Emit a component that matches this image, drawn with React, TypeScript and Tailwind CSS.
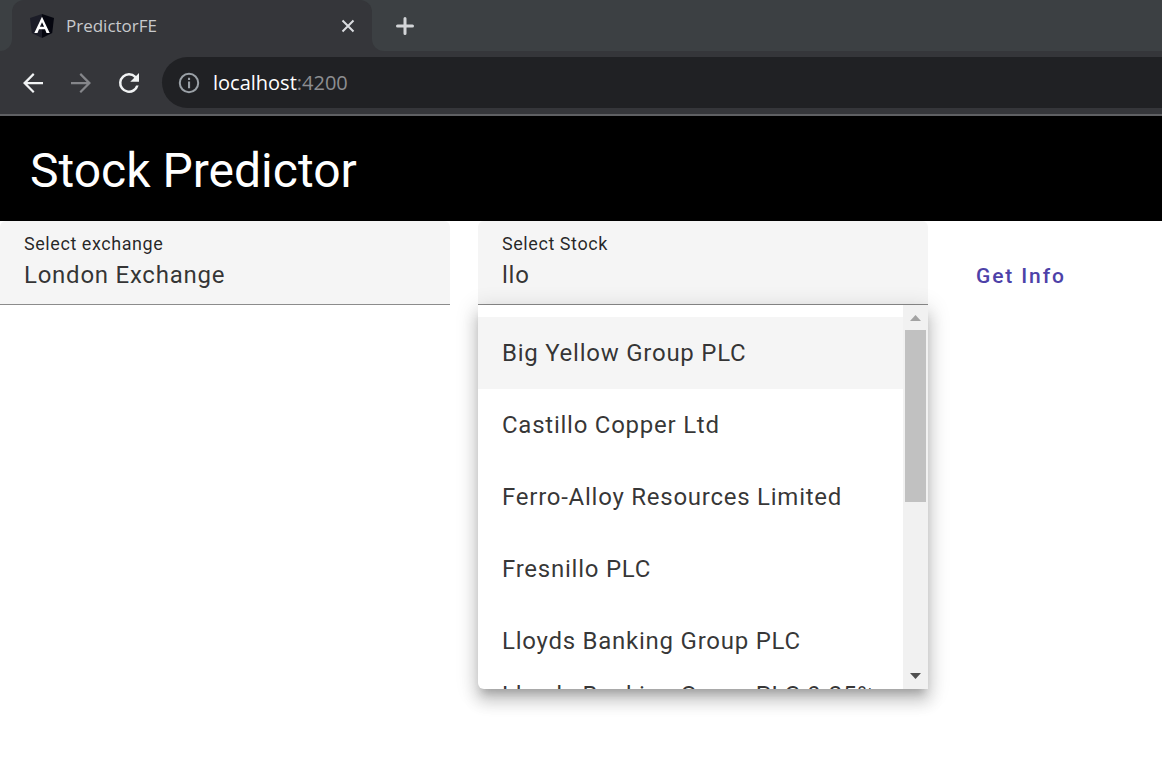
import { useState } from "react";

const stocks = [
  "Big Yellow Group PLC",
  "Castillo Copper Ltd",
  "Ferro-Alloy Resources Limited",
  "Fresnillo PLC",
  "Lloyds Banking Group PLC",
  "Lloyds Banking Group PLC 9.25% Non-Cum Pref",
];

function AngularLogo() {
  return (
    <svg viewBox="0 0 24 24" className="size-6 shrink-0" aria-hidden="true">
      <path d="M12 0 0 4.1 1.8 19 12 24z" fill="#1c1d28" />
      <path d="M12 0 24 4.1 22.2 19 12 24z" fill="#05060f" />
      <path
        fillRule="evenodd"
        d="M12 2.8 4.3 18.9h3.2l1.5-3.6h6l1.5 3.6h3.2zM12 8.2l2.1 4.6H9.9z"
        fill="#fff"
      />
    </svg>
  );
}

function TabStrip() {
  return (
    <div className="flex h-[51px] bg-[#35363a]">
      <div className="w-3 rounded-br-xl bg-[#3c4043]" />
      <div className="flex w-[360px] bg-[#3c4043]">
        <div className="flex flex-1 items-center rounded-t-xl bg-[#35363a] pl-[18px] pr-4">
          <AngularLogo />
          <span className="ml-3 flex-1 text-[17px] text-[#c8cacd]">PredictorFE</span>
          <button type="button" aria-label="Close tab" className="flex size-4 items-center justify-center">
            <svg viewBox="0 0 16 16" className="size-4" fill="none" stroke="#dadce0" strokeWidth="2">
              <path d="M2.5 2.5 13.5 13.5M13.5 2.5 2.5 13.5" />
            </svg>
          </button>
        </div>
      </div>
      <div className="flex flex-1 items-center rounded-bl-xl bg-[#3c4043] pl-[23px]">
        <button type="button" aria-label="New tab">
          <svg viewBox="0 0 20 20" className="size-5" fill="none" stroke="#d3d5d8" strokeWidth="3" strokeLinecap="round">
            <path d="M10 2.5v15M2.5 10h15" />
          </svg>
        </button>
      </div>
    </div>
  );
}

function Toolbar() {
  return (
    <div className="flex h-[65px] items-start border-b-2 border-[#5f6063] bg-[#35363a] pl-[18px] pt-[6px]">
      <div className="flex h-[51px] items-center gap-[18px]">
        <button type="button" aria-label="Back">
          <svg viewBox="0 0 24 24" className="size-[30px]" fill="#f1f3f4">
            <path d="M20 11.1H7.5l5.7-5.8L12 4l-8 8 8 8 1.2-1.3-5.7-5.8H20z" />
          </svg>
        </button>
        <button type="button" aria-label="Forward" disabled>
          <svg viewBox="0 0 24 24" className="size-[30px]" fill="#85868a">
            <path d="M4 11.1h12.5l-5.7-5.8L12 4l8 8-8 8-1.2-1.3 5.7-5.8H4z" />
          </svg>
        </button>
        <button type="button" aria-label="Reload">
          <svg viewBox="0 0 24 24" className="size-[30px]" fill="#f1f3f4">
            <path d="M17.65 6.35A7.96 7.96 0 0 0 12 4a8 8 0 1 0 7.73 10h-2.08A6 6 0 1 1 12 6c1.66 0 3.14.69 4.22 1.78L13 11h7V4z" />
          </svg>
        </button>
      </div>
      <div className="ml-[18px] flex h-[51px] flex-1 items-center rounded-l-full bg-[#202124] pl-[15px]">
        <svg viewBox="0 0 24 24" className="size-6 shrink-0" fill="#9aa0a6" aria-hidden="true">
          <path
            fillRule="evenodd"
            d="M12 1.8a10.2 10.2 0 1 0 0 20.4 10.2 10.2 0 0 0 0-20.4zm0 2a8.2 8.2 0 1 1 0 16.4 8.2 8.2 0 0 1 0-16.4zM11 6.8h2.1v2.1H11zM11 10.6h2.1v6.6H11z"
          />
        </svg>
        <span className="ml-3 text-[20px] text-white">
          localhost<span className="text-[#8d8e91]">:4200</span>
        </span>
      </div>
    </div>
  );
}

function Scrollbar() {
  return (
    <div className="flex w-[25px] shrink-0 flex-col items-center bg-[#f1f1f1]" aria-hidden="true">
      <div className="flex h-[25px] items-center">
        <svg viewBox="0 0 11 6" className="h-[6px] w-[11px]" fill="#a3a3a3">
          <path d="M5.5 0 11 6H0z" />
        </svg>
      </div>
      <div className="h-[172px] w-[21px] bg-[#c1c1c1]" />
      <div className="mt-auto flex h-[26px] items-center">
        <svg viewBox="0 0 11 6" className="h-[6px] w-[11px]" fill="#505050">
          <path d="M5.5 6 11 0H0z" />
        </svg>
      </div>
    </div>
  );
}

const fieldClass =
  "flex h-[84px] flex-col rounded-t-md border-b border-[#8c8c8c] bg-[#f5f5f5] px-6 pt-3";
const labelClass = "text-[18px] leading-[22px] tracking-[0.03125em] text-black/85";
const inputClass =
  "h-10 w-full bg-transparent text-[24px] tracking-[0.03125em] text-black/80 outline-none";

export default function App() {
  const [exchange, setExchange] = useState("London Exchange");
  const [stock, setStock] = useState("llo");

  return (
    <div className="min-h-screen bg-white font-['Roboto',sans-serif]">
      <header className="font-['Open_Sans',sans-serif]">
        <TabStrip />
        <Toolbar />
      </header>
      <div className="flex h-[105px] items-center bg-black px-[30px] pt-1">
        <h1 className="text-[48px] text-white">Stock Predictor</h1>
      </div>
      <main className="flex items-start">
        <div className="w-[450px]">
          <div className={fieldClass}>
            <label htmlFor="exchange" className={labelClass}>Select exchange</label>
            <input
              id="exchange"
              className={inputClass}
              value={exchange}
              onChange={(e) => setExchange(e.target.value)}
            />
          </div>
        </div>
        <div className="relative ml-7 w-[450px]">
          <div className={fieldClass}>
            <label htmlFor="stock" className={labelClass}>Select Stock</label>
            <input
              id="stock"
              role="combobox"
              aria-expanded="true"
              aria-controls="stock-options"
              className={inputClass}
              value={stock}
              onChange={(e) => setStock(e.target.value)}
            />
          </div>
          <div className="absolute left-0 top-full flex h-96 w-full overflow-hidden rounded-bl-md bg-white shadow-[0_8px_8px_-4px_rgba(0,0,0,0.2),0_12px_15px_2px_rgba(0,0,0,0.14),0_4px_21px_3px_rgba(0,0,0,0.12)]">
            <ul id="stock-options" role="listbox" className="flex-1 overflow-hidden pt-3">
              {stocks.map((name, i) => (
                <li
                  key={name}
                  role="option"
                  aria-selected={i === 0}
                  className="flex min-h-[72px] items-center px-6 text-[24px] leading-9 tracking-[0.03125em] text-black/80 aria-selected:bg-[#f5f5f5]"
                >
                  {name}
                </li>
              ))}
            </ul>
            <Scrollbar />
          </div>
        </div>
        <button
          type="button"
          className="ml-9 mt-7 h-14 px-3 text-[21px] font-medium tracking-[0.0892em] text-[#4d41a8]"
        >
          Get Info
        </button>
      </main>
    </div>
  );
}
